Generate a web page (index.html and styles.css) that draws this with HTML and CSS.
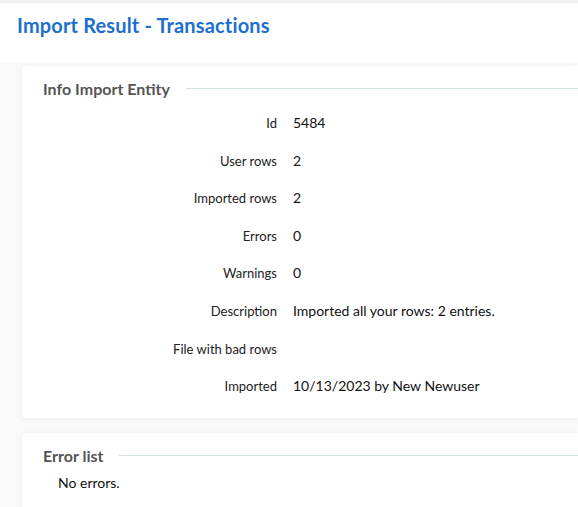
FILE: index.html
```html
<!DOCTYPE html>
<html>
<head>
<meta charset="utf-8">
<link rel="stylesheet" href="styles.css">
</head>
<body>
<div class="topbar"></div>
<header class="page-header">
  <h1 class="page-title">Import Result - Transactions</h1>
</header>
<main class="content">
  <section class="card card-info">
    <div class="legend"><span class="legend-text">Info Import Entity</span><span class="legend-line"></span></div>
    <div class="rows">
      <div class="label">Id</div><div class="value">5484</div>
      <div class="label">User rows</div><div class="value">2</div>
      <div class="label">Imported rows</div><div class="value">2</div>
      <div class="label">Errors</div><div class="value">0</div>
      <div class="label">Warnings</div><div class="value">0</div>
      <div class="label">Description</div><div class="value">Imported all your rows: 2 entries.</div>
      <div class="label">File with bad rows</div><div class="value"></div>
      <div class="label">Imported</div><div class="value">10/13/2023 by New Newuser</div>
    </div>
  </section>
  <section class="card card-errors">
    <div class="legend"><span class="legend-text">Error list</span><span class="legend-line"></span></div>
    <p class="no-errors">No errors.</p>
  </section>
</main>
</body>
</html>
```
FILE: styles.css
```css
* { box-sizing: border-box; }
html, body { margin: 0; padding: 0; }
body {
  font-family: "Lato", "Open Sans", sans-serif;
  color: #1a1a1a;
  background: #fafafa;
  overflow: hidden;
  height: 507px;
}
.topbar { height: 3px; background: #f0f0f2; }
.page-header {
  background: #ffffff;
  height: 59px;
  padding: 10px 17px 0;
}
.page-title {
  margin: 0;
  font-size: 20px;
  font-weight: 700;
  color: #1d6fcf;
  line-height: 24px;
  letter-spacing: 0.15px;
}
.content {
  padding: 4px 0 0 22px;
  display: flex;
  flex-direction: column;
  gap: 15px;
}
.card {
  background: #ffffff;
  box-shadow: 0 1px 5px rgba(0, 0, 0, 0.07);
  border-radius: 3px 0 0 3px;
  padding: 12px 0 0 21px;
}
.card-info { height: 352px; }
.card-errors { height: 80px; }
.legend {
  display: flex;
  align-items: center;
  gap: 16px;
  height: 20px;
}
.legend-text {
  font-size: 16px;
  font-weight: 700;
  color: #555555;
  white-space: nowrap;
}
.legend-line {
  flex: 1;
  height: 1px;
  background: #d5e1e9;
}
.rows {
  display: grid;
  grid-template-columns: 234px 1fr;
  column-gap: 16px;
  grid-auto-rows: 37.6px;
  margin-top: 15px;
}
.label {
  text-align: right;
  font-size: 13px;
  color: #222;
  line-height: 20px;
}
.value {
  font-size: 14px;
  color: #111;
  line-height: 20px;
}
.no-errors {
  margin: 8px 0 0 15px;
  font-size: 14px;
  color: #111;
  line-height: 20px;
}
```
